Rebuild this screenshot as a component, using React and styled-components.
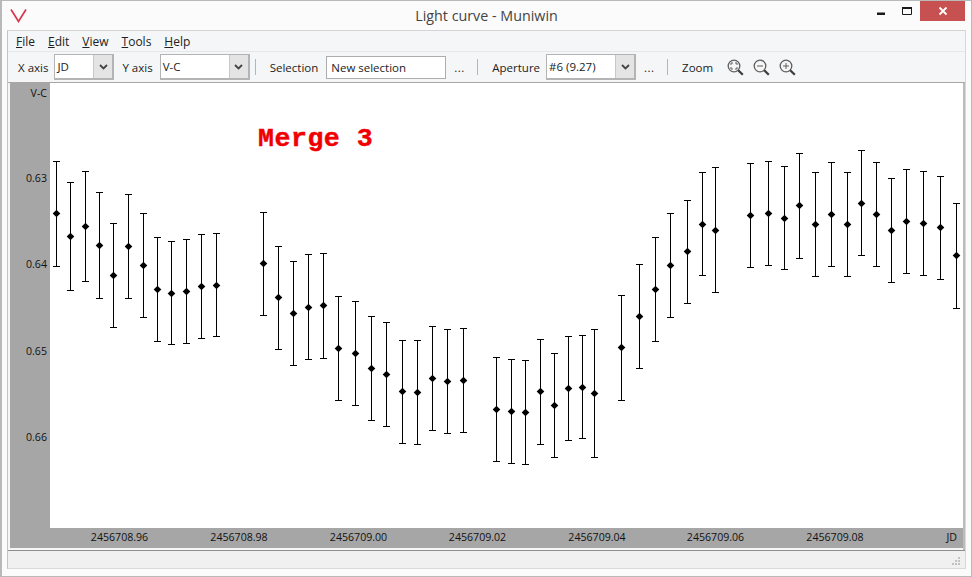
import React from 'react';
import styled, { createGlobalStyle } from 'styled-components';

const GlobalStyle = createGlobalStyle`
	html, body {
		margin: 0;
		padding: 0;
		background: #fbfbfb;
	}
`;

// x, y of the point, top and bottom of its error bar, in page pixels
const POINTS = [
	[56, 213, 161, 266], [70, 236, 182, 290], [85, 226, 171, 281], [99, 245, 192, 298],
	[113, 275, 223, 327], [128, 246, 194, 298], [143, 265, 213, 317], [157, 289, 237, 341],
	[171, 293, 241, 344], [186, 291, 239, 343], [201, 286, 234, 338], [216, 285, 233, 336],
	[263, 263, 212, 315], [278, 297, 246, 349], [293, 313, 261, 365], [308, 307, 254, 359],
	[323, 305, 253, 358], [338, 348, 296, 400], [355, 353, 301, 405], [371, 368, 316, 420],
	[386, 374, 322, 426], [402, 391, 340, 443], [417, 392, 340, 444], [432, 378, 326, 430],
	[447, 381, 329, 433], [463, 380, 328, 432],
	[496, 409, 357, 461], [511, 411, 359, 463], [525, 412, 360, 464], [540, 391, 339, 444],
	[554, 405, 353, 457], [568, 388, 336, 440], [582, 387, 335, 438], [594, 393, 329, 457],
	[621, 347, 295, 400], [639, 316, 264, 368], [655, 289, 237, 341], [670, 265, 213, 317],
	[687, 251, 200, 303], [702, 224, 172, 275], [715, 230, 167, 292],
	[750, 215, 163, 267], [768, 213, 161, 265], [784, 218, 166, 269], [799, 205, 153, 258],
	[815, 224, 172, 276], [831, 214, 162, 266], [847, 224, 172, 276], [861, 203, 150, 255],
	[876, 214, 162, 266], [891, 230, 178, 282], [906, 221, 169, 273], [923, 223, 171, 275],
	[940, 227, 176, 279], [956, 255, 203, 308],
];

const Y_TICKS = [['0.63', 177], ['0.64', 263], ['0.65', 350], ['0.66', 436]];

const X_TICKS = [
	['2456708.96', 119.5], ['2456708.98', 239], ['2456709.00', 358.5], ['2456709.02', 477.5],
	['2456709.04', 597], ['2456709.06', 715.5], ['2456709.08', 835],
];

const Window = styled.div`
	box-sizing: border-box;
	width: 972px;
	height: 577px;
	display: flex;
	flex-direction: column;
	background: #fbfbfb;
	border: 1px solid #b9b9b9;
	border-left-width: 2px;
	font-family: 'Open Sans', 'Noto Sans', sans-serif;
	font-size: 12px;
	color: #1a1a1a;
	overflow: hidden;
`;

const TitleBar = styled.div`
	position: relative;
	height: 29px;
	flex: none;
	display: flex;
	align-items: center;
	justify-content: center;
`;

const Logo = styled.svg`
	position: absolute;
	left: 8px;
	top: 7px;
`;

const Title = styled.div`
	font-size: 14.3px;
	color: #444;
`;

const Controls = styled.div`
	position: absolute;
	right: 6px;
	top: 0;
	display: flex;
	align-items: flex-start;
`;

const ControlButton = styled.div`
	width: ${(p) => p.$w}px;
	height: 20px;
	display: flex;
	align-items: center;
	justify-content: center;
	background: ${(p) => (p.$close ? '#c75050' : 'transparent')};
`;

const Client = styled.div`
	flex: 1;
	margin: 0 5px 7px 5px;
	display: flex;
	flex-direction: column;
	border-left: 1px solid #c4c4c4;
	border-right: 1px solid #d8d8d8;
	border-top: 1px solid #d4d4d4;
	border-bottom: 1px solid #dadada;
	background: #f5f6f7;
`;

const MenuBar = styled.div`
	height: 20px;
	flex: none;
	display: flex;
	align-items: center;
	padding-left: 8px;
	gap: 13px;
	border-bottom: 1px solid #e6e7e8;
	color: #222;
`;

const MenuItem = styled.span`
	display: inline-block;
`;

const Toolbar = styled.div`
	height: 30px;
	flex: none;
	display: flex;
	align-items: center;
	padding-left: 10px;
	border-bottom: 1px solid #a6a6a6;
	color: #222;
	font-size: 11.5px;
`;

const Label = styled.span`
	margin-left: ${(p) => p.$left || 0}px;
	margin-right: ${(p) => p.$right || 0}px;
	white-space: nowrap;
`;

const Combo = styled.div`
	box-sizing: border-box;
	width: ${(p) => p.$w}px;
	height: 26px;
	flex: none;
	display: flex;
	background: #fff;
	border: 1px solid #b4b4b4;
	border-right-width: 2px;
	border-bottom-width: 2px;
`;

const ComboText = styled.div`
	flex: 1;
	padding-left: 2px;
	line-height: 23px;
	color: #222;
`;

const ComboButton = styled.div`
	width: 18px;
	display: flex;
	align-items: center;
	justify-content: center;
	background: #e4e4e4;
	border-left: 1px solid #c8c8c8;
`;

const TextEntry = styled.div`
	box-sizing: border-box;
	width: 120px;
	height: 23px;
	flex: none;
	padding-left: 4px;
	line-height: 21px;
	background: #fff;
	border: 1px solid #adadad;
`;

const Dots = styled.span`
	margin-left: 8px;
	width: 12px;
	flex: none;
	letter-spacing: 0.5px;
`;

const Separator = styled.div`
	width: 1px;
	height: 16px;
	flex: none;
	margin: 0 14px 0 ${(p) => p.$left || 0}px;
	background: #b5b5b5;
`;

const ZoomIcons = styled.div`
	display: flex;
	gap: 9px;
	margin-left: 14px;
`;

const ChartFrame = styled.div`
	height: 467px;
	flex: none;
	padding-left: 2px;
	background: #f5f6f7;
	display: flex;
`;

const StatusBar = styled.div`
	flex: 1;
	position: relative;
	background: #f0f0f0;
	border-top: 1px solid #8e8e8e;
`;

const Grip = styled.svg`
	position: absolute;
	right: 4px;
	bottom: 2px;
`;

const Bar = ({ x, y, top, bottom }) => (
	<g>
		<path
			d={`M${x + 0.5} ${top}V${bottom}M${x - 3} ${top + 0.5}H${x + 4}M${x - 3} ${bottom + 0.5}H${x + 4}`}
			stroke='#000'
			strokeWidth='1'
			fill='none'
			shapeRendering='crispEdges'
		/>
		<path d={`M${x + 0.5} ${y - 3.3}L${x + 4.3} ${y + 0.5}L${x + 0.5} ${y + 4.3}L${x - 3.3} ${y + 0.5}Z`} fill='#000' />
	</g>
);

const Chart = () => (
	<svg width='955' height='467' viewBox='10 83 955 467' style={{ display: 'block' }}>
		<rect x='10' y='83' width='953' height='465' fill='#a6a6a6' />
		<rect x='50' y='83' width='913' height='445' fill='#fff' />
		<rect x='963' y='83' width='2' height='467' fill='#bcbcbc' />
		<g fontFamily="'Open Sans', 'Noto Sans', sans-serif" fontSize='10.6' fill='#111'>
			<text x='47' y='96.5' textAnchor='end'>V-C</text>
			{Y_TICKS.map(([label, y]) => (
				<text key={label} x='47' y={y + 4.5} textAnchor='end'>{label}</text>
			))}
			{X_TICKS.map(([label, x]) => (
				<text key={label} x={x} y='541' textAnchor='middle'>{label}</text>
			))}
			<text x='957' y='541' textAnchor='end'>JD</text>
		</g>
		<text
			x='258'
			y='146'
			fontFamily="'Liberation Mono', monospace"
			fontWeight='700'
			fontSize='26.6'
			letterSpacing='0.5'
			stroke='#f00000'
			strokeWidth='0.4'
			fill='#f00000'
		>
			Merge 3
		</text>
		{POINTS.map(([x, y, top, bottom]) => (
			<Bar key={x} x={x} y={y} top={top} bottom={bottom} />
		))}
	</svg>
);

const Chevron = () => (
	<svg width='9' height='6' viewBox='0 0 9 6'>
		<path d='M1 1l3.5 3.5L8 1' fill='none' stroke='#444' strokeWidth='1.8' />
	</svg>
);

const Magnifier = ({ children }) => (
	<svg width='17' height='17' viewBox='0 0 17 17'>
		<circle cx='7' cy='7' r='5.8' fill='#f6f6f6' stroke='#5f5f5f' strokeWidth='1.3' />
		<path d='M11.2 11.2l4.6 4.6' stroke='#3c3c3c' strokeWidth='2.2' />
		{children}
	</svg>
);

export default function App() {
	return (
		<>
			<GlobalStyle />
			<Window>
				<TitleBar>
					<Logo width='18' height='16' viewBox='0 0 18 16'>
						<path d='M1 1.5L8.5 13.5L16 1.5' fill='none' stroke='#d8344a' strokeWidth='1.7' />
					</Logo>
					<Title>Light curve - Muniwin</Title>
					<Controls>
						<ControlButton $w={26}>
							<svg width='8' height='8' viewBox='0 0 8 8'>
								<rect x='0' y='5.5' width='8' height='2.5' fill='#1a1a1a' />
							</svg>
						</ControlButton>
						<ControlButton $w={26}>
							<svg width='10' height='8' viewBox='0 0 10 8'>
								<path d='M.5 1.5h9v6h-9z' fill='none' stroke='#1a1a1a' />
								<rect x='0' y='0' width='10' height='2' fill='#1a1a1a' />
							</svg>
						</ControlButton>
						<ControlButton $w={45} $close>
							<svg width='10' height='10' viewBox='0 0 10 10'>
								<path d='M1.5 1.5l7 7M8.5 1.5l-7 7' stroke='#fff' strokeWidth='1.8' />
							</svg>
						</ControlButton>
					</Controls>
				</TitleBar>
				<Client>
					<MenuBar>
						<MenuItem><u>F</u>ile</MenuItem>
						<MenuItem><u>E</u>dit</MenuItem>
						<MenuItem><u>V</u>iew</MenuItem>
						<MenuItem><u>T</u>ools</MenuItem>
						<MenuItem><u>H</u>elp</MenuItem>
					</MenuBar>
					<Toolbar>
						<Label $right={6}>X axis</Label>
						<Combo $w={60}>
							<ComboText>JD</ComboText>
							<ComboButton><Chevron /></ComboButton>
						</Combo>
						<Label $left={8} $right={7}>Y axis</Label>
						<Combo $w={90}>
							<ComboText>V-C</ComboText>
							<ComboButton><Chevron /></ComboButton>
						</Combo>
						<Separator $left={5} />
						<Label $right={8}>Selection</Label>
						<TextEntry>New selection</TextEntry>
						<Dots>...</Dots>
						<Separator $left={11} />
						<Label $right={6}>Aperture</Label>
						<Combo $w={90}>
							<ComboText>#6 (9.27)</ComboText>
							<ComboButton><Chevron /></ComboButton>
						</Combo>
						<Dots>...</Dots>
						<Separator $left={11} />
						<Label>Zoom</Label>
						<ZoomIcons>
							<Magnifier>
								<path d='M4 6V4h2M8 4h2v2M10 8v2H8M6 10H4V8' fill='none' stroke='#5f5f5f' />
							</Magnifier>
							<Magnifier>
								<path d='M4 7h6' stroke='#5f5f5f' />
							</Magnifier>
							<Magnifier>
								<path d='M4 7h6M7 4v6' stroke='#5f5f5f' />
							</Magnifier>
						</ZoomIcons>
					</Toolbar>
					<ChartFrame>
						<Chart />
					</ChartFrame>
					<StatusBar>
						<Grip width='10' height='10' viewBox='0 0 10 10'>
							<path d='M7 1h2v2H7zM4 4h2v2H4zM7 4h2v2H7zM1 7h2v2H1zM4 7h2v2H4zM7 7h2v2H7z' fill='#c2c2c2' />
						</Grip>
					</StatusBar>
				</Client>
			</Window>
		</>
	);
}
